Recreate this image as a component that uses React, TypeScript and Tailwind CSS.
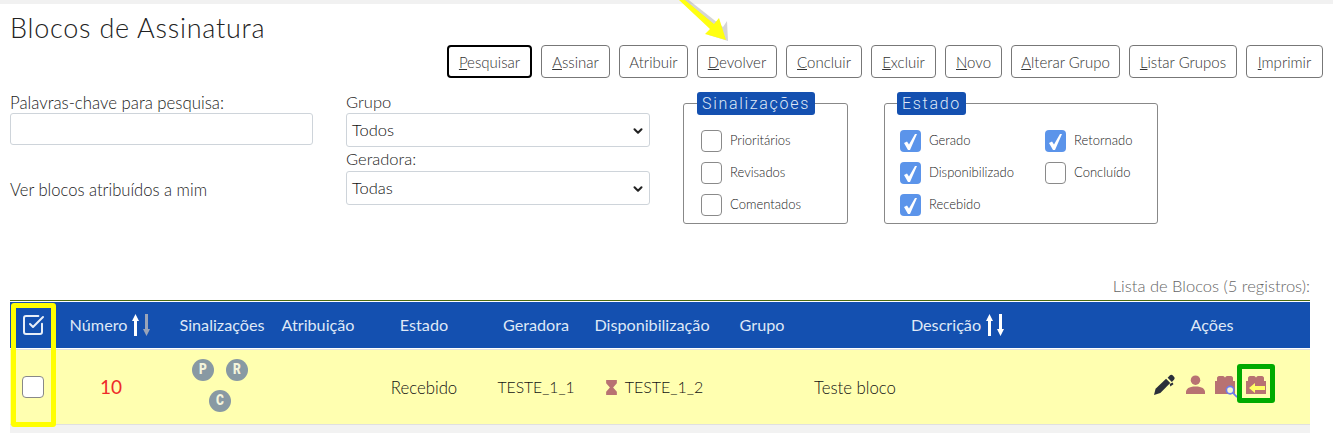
import { ChevronDown, SquareCheckBig } from 'lucide-react'

const botoes = [
  { inicial: 'P', resto: 'esquisar', largura: 'w-[85px]', foco: true },
  { inicial: 'A', resto: 'ssinar', largura: 'w-[69px]' },
  { inicial: '', resto: 'Atribuir', largura: 'w-[69px]' },
  { inicial: 'D', resto: 'evolver', largura: 'w-[80px]' },
  { inicial: 'C', resto: 'oncluir', largura: 'w-[76px]' },
  { inicial: 'E', resto: 'xcluir', largura: 'w-[65px]' },
  { inicial: 'N', resto: 'ovo', largura: 'w-[57px]' },
  { inicial: 'A', resto: 'lterar Grupo', largura: 'w-[109px]' },
  { inicial: 'L', resto: 'istar Grupos', largura: 'w-[108px]' },
  { inicial: 'I', resto: 'mprimir', largura: 'w-[77px]' },
]

const Caixa = ({ marcada, label }: { marcada?: boolean; label: string }) => (
  <div className="flex h-[22px] items-center gap-[8px]">
    <span
      className={
        marcada
          ? 'flex h-[22px] w-[21px] items-center justify-center rounded-[4px] bg-[#5b94ea]'
          : 'h-[22px] w-[21px] rounded-[4px] border border-[#8a8a8a] bg-white'
      }
    >
      {marcada && (
        <svg viewBox="0 0 13 16" className="mt-[2px] h-[16px] w-[13px]" fill="white">
          <path d="M0 9l3-1.500 2 3L11 0h2L6 16H4z" />
        </svg>
      )}
    </span>
    <span className="text-[13px] text-[#222]">{label}</span>
  </div>
)

const Legenda = ({ children, recuo }: { children: string; recuo: string }) => (
  <legend className={`${recuo} h-[23px] rounded-[3px] bg-[#1450b0] px-[5px] font-['Roboto',sans-serif] text-[16px] leading-[23px] tracking-[1.700px] text-[#dfe8f6]`}>
    {children}
  </legend>
)

const Selecao = ({ valor }: { valor: string }) => (
  <div className="flex h-[34px] w-[304px] items-center justify-between rounded-[3px] border border-[#ced4da] bg-white pl-[5px] pr-[4px] pt-[1px] text-[16.500px] text-[#111]">
    {valor}
    <ChevronDown className="h-[14px] w-[14px] text-[#222]" strokeWidth={3.5} />
  </div>
)

const Seta = ({ cor, baixo }: { cor: string; baixo?: boolean }) => (
  <svg viewBox="0 0 7 22" className={`h-[22px] w-[7px] ${baixo ? 'rotate-180' : ''}`} fill={cor}>
    <path d="M3.500 0L7 7H5v15H2V7H0z" />
  </svg>
)

const Bolinha = ({ letra }: { letra: string }) => (
  <span className="flex h-[22px] w-[22px] items-center justify-center rounded-full bg-[#8899a3] font-['Roboto',sans-serif] text-[15px] font-black text-[#f4f4dc]">
    <span className="scale-x-[.8]">{letra}</span>
  </span>
)

const IconeBloco = ({ className }: { className: string }) => (
  <svg viewBox="0 0 20 18" className={className} fill="#b87272">
    <path d="M0 18V5h2V2c0-1 1-2 2-2h4c1 0 2 1 2 2 0-1 1-2 2-2h4c1 0 2 1 2 2v3h2v13z" />
  </svg>
)

const IconesAcoes = () => (
  <div className="-mt-[5px] flex items-center pl-[40px]">
    <svg viewBox="0 0 20 20" className="h-[21px] w-[21px]" fill="#2b2f3a">
      <path d="M0 20l1.500-6L11.500 4.500l4 4L6 18z" />
      <path d="M13 3.500l2-2c1-1 2-1 3 0l1 1c1 1 .8 2 0 3l-2 2z" />
      <path d="M15 9.500l2.800-1.300.7 1.500-3 2.300z" />
    </svg>
    <svg viewBox="0 0 20 20" className="ml-[11px] h-[19px] w-[19px]" fill="#b87272">
      <circle cx="10" cy="5.500" r="5" />
      <path d="M0 20v-2c0-3.500 3-6 10-6s10 2.500 10 6v2z" />
    </svg>
    <div className="relative ml-[10px] h-[18px] w-[20px]">
      <IconeBloco className="h-[18px] w-[20px]" />
      <svg viewBox="0 0 14 14" className="absolute -right-[3px] top-[9px] h-[13px] w-[13px]" fill="none" stroke="#6b7cf0" strokeWidth="1.800">
        <circle cx="5.500" cy="5.500" r="4" fill="#f8f4d0" />
        <path d="M8.500 8.500l4.500 4.500" />
      </svg>
    </div>
    <div className="relative ml-[11px] h-[18px] w-[20px]">
      <IconeBloco className="h-[18px] w-[20px]" />
      <svg viewBox="0 0 16 10" className="absolute left-[3px] top-[7px] h-[10px] w-[16px]" fill="#ffff66">
        <path d="M0 5l6-5v3h10v4H6v3z" />
      </svg>
    </div>
  </div>
)

export default function App() {
  return (
    <div className="relative h-[433px] overflow-hidden bg-white font-['Lato',sans-serif] font-light text-[#222]">
      <div className="h-[4px] bg-[#f1f1f1]" />

      <h1 className="ml-[10px] mt-[7px] text-[27px] font-light leading-[34px] tracking-[0.750px] text-[#222]">
        Blocos de Assinatura
      </h1>

      <div className="flex justify-end gap-[9px] pr-[10px]">
        {botoes.map((botao) => (
          <button
            key={botao.resto}
            className={`${botao.largura} h-[33px] rounded-[4px] pt-[1px] text-center text-[15px] text-[#333] ${
              botao.foco ? 'border-2 border-black' : 'border border-[#777]'
            }`}
          >
            <u>{botao.inicial}</u>
            {botao.resto}
          </button>
        ))}
      </div>

      <div className="mt-[14px] flex pl-[10px]">
        <div className="w-[303px]">
          <label className="block h-[21px] text-[16.800px] leading-[21px]">Palavras-chave para pesquisa:</label>
          <input className="block h-[32px] w-[303px] rounded-[3px] border border-[#ced4da] bg-white" />
          <p className="mt-[35px] text-[16.600px] leading-[20px]">Ver blocos atribuídos a mim</p>
        </div>

        <div className="ml-[33px] w-[304px]">
          <label className="-mt-[1px] block h-[22px] text-[16.500px] leading-[23px]">Grupo</label>
          <Selecao valor="Todos" />
          <label className="mt-[1px] block h-[23px] text-[16.500px] leading-[22px]">Geradora:</label>
          <Selecao valor="Todas" />
        </div>

        <fieldset className="ml-[33px] h-[132px] w-[165px] rounded-[3px] border border-[#888] pl-[17px]">
          <Legenda recuo="-ml-[4px]">Sinalizações</Legenda>
          <div className="mt-[15px] flex flex-col gap-[10px]">
            <Caixa label="Prioritários" />
            <Caixa label="Revisados" />
            <Caixa label="Comentados" />
          </div>
        </fieldset>

        <fieldset className="ml-[36px] h-[132px] w-[274px] rounded-[3px] border border-[#888] pl-[15px]">
          <Legenda recuo="-ml-[3px]">Estado</Legenda>
          <div className="mt-[15px] grid grid-cols-[145px_1fr] gap-y-[10px]">
            <Caixa marcada label="Gerado" />
            <Caixa marcada label="Retornado" />
            <Caixa marcada label="Disponibilizado" />
            <Caixa label="Concluído" />
            <Caixa marcada label="Recebido" />
          </div>
        </fieldset>
      </div>

      <p className="mt-[52px] pr-[23px] text-right text-[16.500px] leading-[20px] text-[#666]">Lista de Blocos (5 registros):</p>

      <div className="ml-[10px] mt-[4px] w-[1300px] border-t border-[#4d6b10]">
        <div className="mt-[1px] grid h-[46px] grid-cols-[45px_110px_114px_78px_134px_90px_142px_78px_313px_196px] items-center bg-[#1450b0] text-center text-[16.200px] font-normal text-[#dfe8f6]">
          <span className="flex justify-center">
            <SquareCheckBig className="h-[24px] w-[24px] text-[#e8eef8]" strokeWidth={2} />
          </span>
          <span className="flex items-center justify-center gap-[4px]">
            <span className="mr-[1px]">Número</span>
            <Seta cor="#ffffff" />
            <Seta cor="#9aa4b8" baixo />
          </span>
          <span>Sinalizações</span>
          <span>Atribuição</span>
          <span>Estado</span>
          <span>Geradora</span>
          <span>Disponibilização</span>
          <span>Grupo</span>
          <span className="flex items-center justify-center gap-[4px]">
            <span className="mr-[1px]">Descrição</span>
            <Seta cor="#ffffff" />
            <Seta cor="#ffffff" baixo />
          </span>
          <span>Ações</span>
        </div>

        <div className="mt-[1px] grid h-[75px] grid-cols-[45px_110px_114px_78px_134px_90px_142px_78px_313px_196px] items-center border-t border-[#e0e0e0] bg-[#ffffb0] text-center text-[16.800px] text-[#111]">
          <span className="flex justify-center">
            <span className="h-[22px] w-[22px] rounded-[4px] border border-[#888] bg-white" />
          </span>
          <span className="pl-[2px] text-[19px] font-normal text-[#ee2a2a]">10</span>
          <span className="-mt-[4px] flex flex-wrap justify-center gap-x-[12px] gap-y-[9px] pl-[16px] pr-[20px]">
            <Bolinha letra="P" />
            <Bolinha letra="R" />
            <Bolinha letra="C" />
          </span>
          <span />
          <span className="pt-[2px]">Recebido</span>
          <span className="pt-[1px] text-[15.700px]">TESTE_1_1</span>
          <span className="flex items-center justify-center gap-[8px] pl-[5px] text-[16px]">
            <svg viewBox="0 0 10 14" className="h-[15px] w-[11px]" fill="#b87272">
              <path d="M0 0h10v3L6.500 7 10 11v3H0v-3l3.500-4L0 3z" />
            </svg>
            TESTE_1_2
          </span>
          <span />
          <span className="pl-[13px] pt-[2px] text-left">Teste bloco</span>
          <IconesAcoes />
        </div>
        <div className="h-[10px] border-t border-[#e0e0e0] bg-[#f2f2f2]" />
      </div>

      {/* destaques por cima da tela */}
      <svg viewBox="0 0 60 48" className="absolute left-[672px] top-0 h-[48px] w-[60px]">
        <path d="M8-2l4-3 38 30 4-6 1 20-19-6 6-5z" fill="#888" opacity=".35" transform="translate(1 2)" />
        <path d="M7 0h6l29 24 5-6 7 22-21-6 5-5z" fill="#ffff10" />
      </svg>
      <div className="absolute left-[11px] top-[303px] h-[124px] w-[45px] rounded-[3px] border-[5px] border-[#ffff00]" />
      <div className="absolute left-[1237px] top-[364px] h-[39px] w-[38px] rounded-[3px] border-[5px] border-[#00aa00]" />
    </div>
  )
}
